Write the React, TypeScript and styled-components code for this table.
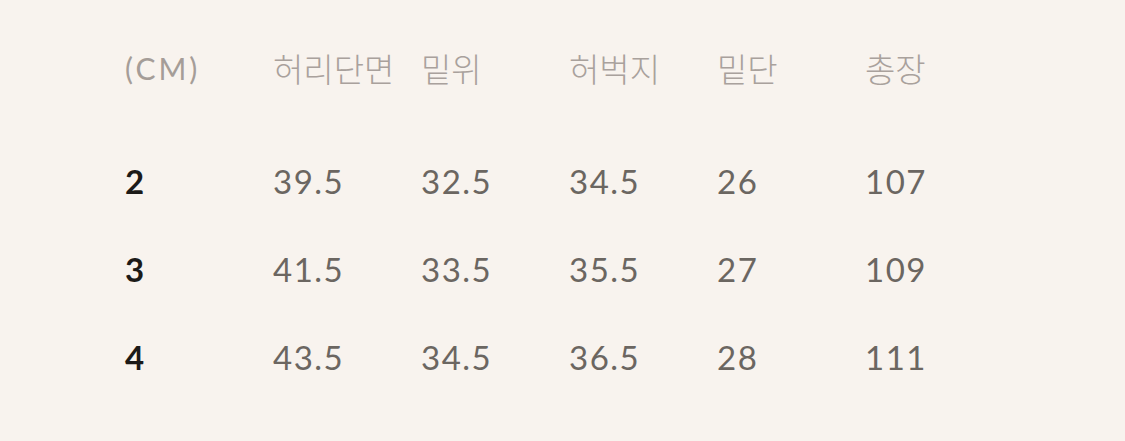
import styled, { createGlobalStyle } from "styled-components";

const GlobalStyle = createGlobalStyle`
  html, body {
    margin: 0;
    padding: 0;
    background: #f8f3ee;
  }
`;

const headers = ["허리단면", "밑위", "허벅지", "밑단", "총장"];

const rows = [
  { size: "2", values: ["39.5", "32.5", "34.5", "26", "107"] },
  { size: "3", values: ["41.5", "33.5", "35.5", "27", "109"] },
  { size: "4", values: ["43.5", "34.5", "36.5", "28", "111"] },
];

export default function App() {
  return (
    <>
      <GlobalStyle />
      <Page>
        <HeaderRow>
          <UnitLabel>(CM)</UnitLabel>
          {headers.map((h) => (
            <HeadCell key={h}>{h}</HeadCell>
          ))}
        </HeaderRow>
        {rows.map((r) => (
          <Row key={r.size}>
            <SizeCell>{r.size}</SizeCell>
            {r.values.map((v, i) => (
              <ValueCell key={i}>{v}</ValueCell>
            ))}
          </Row>
        ))}
      </Page>
    </>
  );
}

const Page = styled.div`
  width: 1125px;
  height: 441px;
  box-sizing: border-box;
  padding: 24px 0 0 125px;
  background: #f8f3ee;
  display: flex;
  flex-direction: column;
`;

const Row = styled.div`
  display: grid;
  grid-template-columns: repeat(6, 148px);
  height: 88px;
  align-items: center;
`;

const HeaderRow = styled(Row)`
  margin-bottom: 25px;
`;

const UnitLabel = styled.span`
  font-family: Lato, "Noto Sans", sans-serif;
  font-size: 30px;
  font-weight: 400;
  letter-spacing: 3px;
  color: #a59d98;
`;

const HeadCell = styled.span`
  font-family: "Noto Sans CJK KR", sans-serif;
  font-size: 33px;
  font-weight: 300;
  color: #a9a19c;
  white-space: nowrap;
`;

const SizeCell = styled.span`
  font-family: Lato, "Noto Sans", sans-serif;
  font-size: 33px;
  font-weight: 700;
  color: #1c1a18;
`;

const ValueCell = styled.span`
  font-family: Lato, "Noto Sans", sans-serif;
  font-size: 33px;
  font-weight: 400;
  letter-spacing: 1.5px;
  color: #6b6661;
`;
